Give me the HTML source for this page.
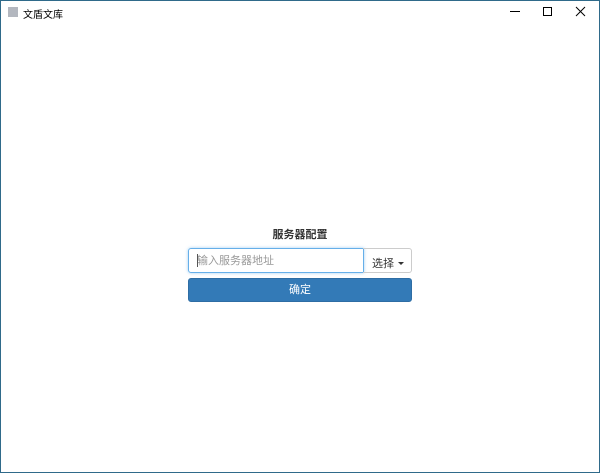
<!DOCTYPE html>
<html><head><meta charset="utf-8"><style>
*{margin:0;padding:0;box-sizing:border-box}
body{width:600px;height:473px;background:#fff;font-family:"Liberation Sans","Noto Sans CJK SC",sans-serif;position:relative;overflow:hidden}
.frame{position:absolute;inset:0;border:1px solid #2f6a8a;}
.icon{position:absolute;left:8px;top:7px;width:10px;height:10px;background:#b3b7bf}
.title{position:absolute;left:23px;top:6px;font-size:10px;color:#000}
.ctl{position:absolute;top:0;height:24px;width:30px}
h3{position:absolute;left:0;right:0;top:226px;text-align:center;font-size:11px;font-weight:bold;color:#333}
.inp{position:absolute;left:188px;top:248px;width:176px;height:25px;border:1px solid #66afe9;border-radius:3px 0 0 3px;box-shadow:0 0 3px rgba(102,175,233,.6);font-size:11px;color:#999;padding:6px 8px;line-height:13px}
.caret{position:absolute;left:197px;top:254px;width:1px;height:13px;background:#555}
.sel{position:absolute;left:363px;top:248px;width:49px;height:25px;border:1px solid #ccc;border-left:none;border-radius:0 3px 3px 0;font-size:11px;color:#333;padding:6px 0 0 9px}
.sel i{display:inline-block;width:0;height:0;border-left:3px solid transparent;border-right:3px solid transparent;border-top:3px solid #333;margin-left:4px;vertical-align:2px}
.btn{position:absolute;left:188px;top:278px;width:224px;height:24px;background:#337ab7;border:1px solid #2e6da4;border-radius:3px;color:#fff;font-size:11px;text-align:center;line-height:22px}
</style></head><body>
<div class="frame"></div>
<div class="icon"></div>
<div class="title">文盾文库</div>
<svg class="ctl" style="left:500px" viewBox="0 0 30 24"><line x1="10" y1="11.5" x2="20" y2="11.5" stroke="#000" stroke-width="1"/></svg>
<svg class="ctl" style="left:532px" viewBox="0 0 30 24"><rect x="11.5" y="7.5" width="8" height="8" fill="none" stroke="#000" stroke-width="1"/></svg>
<svg class="ctl" style="left:566px" viewBox="0 0 30 24"><path d="M10 7L19 16M19 7L10 16" stroke="#000" stroke-width="1"/></svg>
<h3>服务器配置</h3>
<div class="inp">输入服务器地址</div>
<div class="caret"></div>
<div class="sel">选择<i></i></div>
<div class="btn">确定</div>
</body></html>
